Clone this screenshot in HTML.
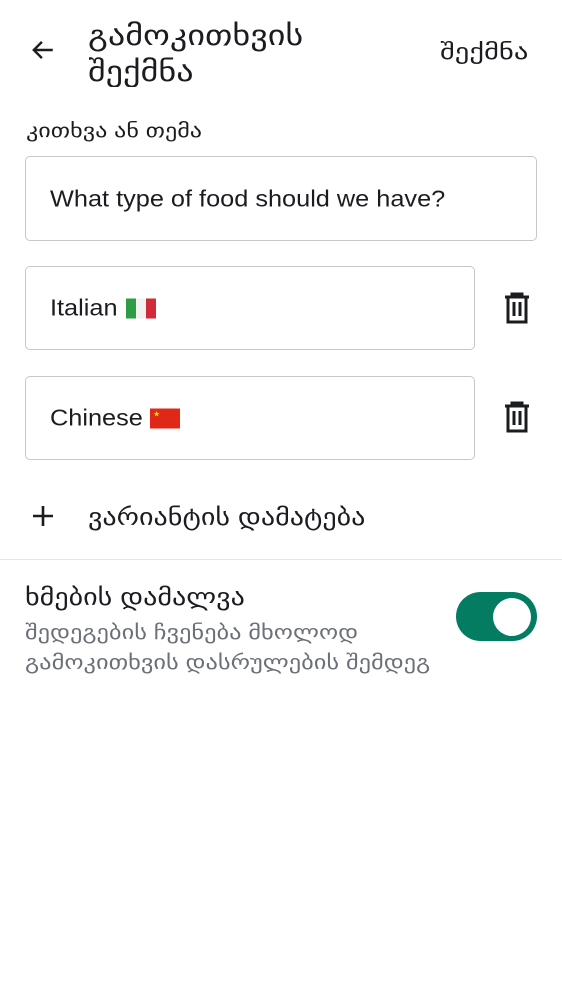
<!DOCTYPE html>
<html><head><meta charset="utf-8"><style>
body{margin:0;width:562px;height:1000px;background:#fff;font-family:"Liberation Sans","DejaVu Sans",sans-serif;color:#1b1c1f;position:relative;overflow:hidden}
.a{position:absolute;white-space:nowrap;transform-origin:left center}
.box{position:absolute;border:1.5px solid #c4c7cc;border-radius:5px;box-sizing:border-box}
.t{position:absolute;left:24px;top:50%;transform:translateY(-50%);font-size:23px;display:flex;align-items:center;gap:8px}
.s{display:inline-block;transform:scaleX(1.1);transform-origin:left center}
</style></head><body>
<svg class="a" style="left:30px;top:37px" width="26" height="26" viewBox="0 0 24 24"><path d="M21 12H4M11 4.5L3.5 12l7.5 7.5" fill="none" stroke="#1b1c1f" stroke-width="2.2"/></svg>
<div class="a" style="left:88px;top:18px;font-size:28px;line-height:36px;transform:scaleX(1.22)">გამოკითხვის<br>შექმნა</div>
<div class="a" style="left:440px;top:39px;font-size:22px;transform:scaleX(1.3)">შექმნა</div>
<div class="a" style="left:26px;top:120px;font-size:19px;transform:scaleX(1.27)">კითხვა ან თემა</div>
<div class="box" style="left:25px;top:156px;width:512px;height:85px"><div class="t"><span class="s">What type of food should we have?</span></div></div>
<div class="box" style="left:25px;top:266px;width:450px;height:84px"><div class="t"><span class="s">Italian</span><svg style="margin-left:7px" width="30" height="22"><rect x="0" y="1" width="10" height="20" fill="#2e9b45"/><rect x="10" y="1" width="10" height="20" fill="#f2f2f2"/><rect x="20" y="1" width="10" height="20" fill="#d12a3a"/></svg></div></div>
<div class="box" style="left:25px;top:376px;width:450px;height:84px"><div class="t"><span class="s">Chinese</span><svg style="margin-left:8px" width="30" height="22"><rect x="0" y="1" width="30" height="20" fill="#e02818"/><text x="3" y="9" font-size="8" fill="#ffdd00">★</text></svg></div></div>
<svg class="a" style="left:503px;top:292px" width="28" height="32" viewBox="0 0 28 32"><path d="M2 5h24M9 5V2h10v3M5 5v25h18V5M11 10v14M17 10v14" fill="none" stroke="#1b1c1f" stroke-width="3"/></svg>
<svg class="a" style="left:503px;top:401px" width="28" height="32" viewBox="0 0 28 32"><path d="M2 5h24M9 5V2h10v3M5 5v25h18V5M11 10v14M17 10v14" fill="none" stroke="#1b1c1f" stroke-width="3"/></svg>
<svg class="a" style="left:31px;top:504px" width="24" height="24" viewBox="0 0 24 24"><path d="M12 2v20M2 12h20" stroke="#1b1c1f" stroke-width="2.6"/></svg>
<div class="a" style="left:88px;top:503px;font-size:24px;transform:scaleX(1.17)">ვარიანტის დამატება</div>
<div class="a" style="left:0;top:559px;width:562px;height:1px;background:#e4e5e8"></div>
<div class="a" style="left:25px;top:583px;font-size:24px;transform:scaleX(1.17)">ხმების დამალვა</div>
<div class="a" style="left:25px;top:618px;font-size:20px;line-height:30px;color:#6b6f78;transform:scaleX(1.22)">შედეგების ჩვენება მხოლოდ<br>გამოკითხვის დასრულების შემდეგ</div>
<div class="a" style="left:456px;top:592px;width:81px;height:49px;border-radius:25px;background:#047c62"></div>
<div class="a" style="left:493px;top:598px;width:38px;height:38px;border-radius:50%;background:#fff"></div>
</body></html>
